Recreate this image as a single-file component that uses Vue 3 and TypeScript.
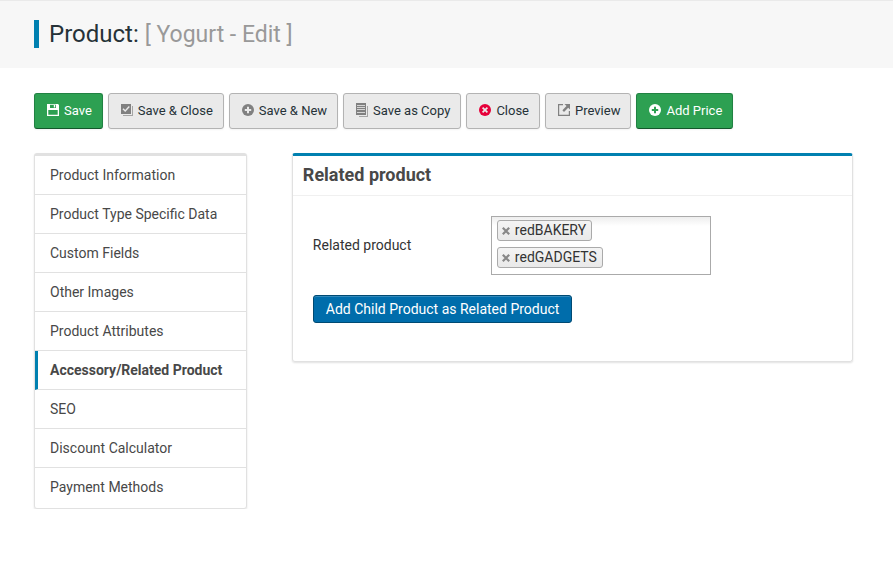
<script setup lang="ts">
import { ref } from 'vue'

type Icon = 'save' | 'saveClose' | 'plus' | 'copy' | 'cancel' | 'preview'

interface ToolbarAction {
  label: string
  icon: Icon
  tone?: 'success' | 'danger'
}

const actions: ToolbarAction[] = [
  { label: 'Save', icon: 'save', tone: 'success' },
  { label: 'Save & Close', icon: 'saveClose' },
  { label: 'Save & New', icon: 'plus' },
  { label: 'Save as Copy', icon: 'copy' },
  { label: 'Close', icon: 'cancel', tone: 'danger' },
  { label: 'Preview', icon: 'preview' },
  { label: 'Add Price', icon: 'plus', tone: 'success' },
]

const tabs: string[] = [
  'Product Information',
  'Product Type Specific Data',
  'Custom Fields',
  'Other Images',
  'Product Attributes',
  'Accessory/Related Product',
  'SEO',
  'Discount Calculator',
  'Payment Methods',
]

const activeTab = ref('Accessory/Related Product')
const related = ref<string[]>(['redBAKERY', 'redGADGETS'])
const query = ref('')

function removeRelated(name: string): void {
  related.value = related.value.filter((item) => item !== name)
}

function addRelated(): void {
  const name = query.value.trim()
  if (name && !related.value.includes(name)) related.value.push(name)
  query.value = ''
}
</script>

<template>
  <div class="page">
    <header class="page-header">
      <h1 class="title">Product: <small>[ Yogurt - Edit ]</small></h1>
    </header>

    <div class="toolbar" role="toolbar">
      <button v-for="action in actions" :key="action.label" type="button" class="tool" :class="action.tone">
        <svg class="icon" viewBox="0 0 12 12" aria-hidden="true">
          <path
            v-if="action.icon === 'save'"
            fill="currentColor"
            fill-rule="evenodd"
            d="M0 0H11L12 1V12H0ZM1.3 6V10.8H10.7V6ZM3 0.8V4H9V0.8ZM6.8 1H8.2V3.5H6.8Z"
          />
          <template v-else-if="action.icon === 'saveClose'">
            <path fill="currentColor" opacity="0.65" d="M11 2H12V12H2V11H11Z" />
            <path fill="currentColor" d="M0 0H10V10H0Z" />
            <path fill="none" stroke="#eaeaea" stroke-width="1.4" d="M2 4.7L4.2 7L8.3 2.5" />
          </template>
          <template v-else-if="action.icon === 'plus'">
            <circle cx="6" cy="6" r="6" fill="currentColor" />
            <path class="cutout" stroke-width="2" d="M6 2.8V9.2M2.8 6H9.2" />
          </template>
          <template v-else-if="action.icon === 'copy'">
            <path fill="currentColor" opacity="0.65" d="M11 2H12V13H3V12H11Z" />
            <path fill="currentColor" d="M0 -1H10V11H0Z" />
            <path stroke="#d5d5d5" stroke-width="1" d="M1 1.5H9M1 3.5H9M1 5.5H9M1 8.5H9" />
          </template>
          <template v-else-if="action.icon === 'cancel'">
            <circle cx="6" cy="6" r="6" fill="currentColor" />
            <path class="cutout" stroke-width="1.7" d="M3.6 3.6L8.4 8.4M8.4 3.6L3.6 8.4" />
          </template>
          <template v-else>
            <path fill="none" stroke="currentColor" stroke-width="1.2" d="M5 0.6H0.6V11.4H11.4V7" />
            <path fill="currentColor" d="M6.5 0H12V5.5L10.2 3.7L6 7.9L4.4 6.3L8.5 2Z" />
          </template>
        </svg>
        <span>{{ action.label }}</span>
      </button>
    </div>

    <div class="content">
      <nav class="tabs">
        <a
          v-for="tab in tabs"
          :key="tab"
          href="#"
          class="tab"
          :class="{ active: tab === activeTab }"
          @click.prevent="activeTab = tab"
        >{{ tab }}</a>
      </nav>

      <main class="panel">
        <h2 class="panel-title">Related product</h2>
        <div class="panel-body">
          <div class="field">
            <label for="related-product">Related product</label>
            <div class="chosen">
              <span v-for="item in related" :key="item" class="chip">
                <button type="button" class="remove" @click="removeRelated(item)">
                  <svg viewBox="0 0 8 8" aria-hidden="true">
                    <path stroke="currentColor" stroke-width="2.2" d="M0.8 0.8L7.2 7.2M7.2 0.8L0.8 7.2" />
                  </svg>
                </button>
                {{ item }}
              </span>
              <input id="related-product" v-model="query" type="text" autocomplete="off" @keydown.enter="addRelated" />
            </div>
          </div>
          <button type="button" class="primary">Add Child Product as Related Product</button>
        </div>
      </main>
    </div>
  </div>
</template>

<style>
body {
  background: #fff;
}
</style>

<style scoped>
.page {
  font-family: Roboto, "Liberation Sans", sans-serif;
  font-size: 14px;
  line-height: 18px;
  color: #333;
}

.page * {
  box-sizing: border-box;
}

button {
  font-family: inherit;
  cursor: pointer;
}

.page-header {
  padding: 19px 34px 20px;
  background: #f7f7f7;
  border-top: 1px solid #eaeaea;
}

.title {
  margin: 0;
  padding-left: 10px;
  border-left: 5px solid #0080b0;
  font-size: 24px;
  font-weight: 400;
  line-height: 28px;
  color: #263238;
}

.title small {
  font-size: 23px;
  line-height: 20px;
  color: #999;
}

.toolbar {
  display: flex;
  flex-wrap: wrap;
  gap: 5px;
  padding: 25px 34px 24px;
}

.tool {
  display: flex;
  align-items: center;
  gap: 5px;
  height: 36px;
  padding: 0 10px 0 12px;
  border: 1px solid #b3b3b3;
  border-radius: 3px;
  background: #eaeaea;
  box-shadow: 0 1px 2px rgba(0, 0, 0, 0.05);
  font-size: 13px;
  line-height: 18px;
  color: #263238;
}

.icon {
  width: 12px;
  height: 12px;
  margin-bottom: 2px;
  overflow: visible;
  color: #808080;
}

.cutout {
  fill: none;
  stroke: #eaeaea;
}

.success {
  border-color: #218243;
  border-bottom-color: #14572b;
  background: #2da052;
  color: #fff;
}

.success .icon {
  color: #fff;
}

.success .cutout {
  stroke: #2da052;
}

.danger .icon {
  color: #e6003a;
}

.content {
  display: grid;
  grid-template-columns: 11fr 29fr;
  gap: 45px;
  align-items: start;
  padding: 0 40px 0 34px;
}

.tabs {
  padding-bottom: 1px;
  border: 1px solid #e1e1e1;
  border-top-width: 3px;
  border-radius: 3px;
  box-shadow: 0 1px 2px rgba(0, 0, 0, 0.12);
}

.tab {
  display: block;
  padding: 10px 12px;
  border-left: 3px solid transparent;
  border-bottom: 1px solid #e1e1e1;
  color: #484848;
  text-decoration: none;
}

.tab:not(.active) {
  padding-left: 15px;
  border-left: 0;
}

.tab:last-child {
  border-bottom-color: transparent;
}

.tab.active {
  border-left-color: #0080b0;
  font-weight: 700;
}

.panel {
  border: 1px solid #e1e1e1;
  border-top: 3px solid #0080b0;
  border-radius: 3px;
  box-shadow: 0 1px 2px rgba(0, 0, 0, 0.12);
}

.panel-title {
  margin: 0;
  padding: 9px 10px 10px;
  border-bottom: 1px solid #f0f0f0;
  font-size: 18px;
  font-weight: 700;
  line-height: 20px;
  color: #484848;
}

.panel-body {
  padding: 20px 20px 38px;
}

.field {
  display: grid;
  grid-template-columns: 178px minmax(0, 220px);
  align-items: center;
  margin-bottom: 20px;
}

.field label {
  padding-bottom: 2px;
}

.chosen {
  display: flex;
  flex-wrap: wrap;
  gap: 6px 8px;
  padding: 3px 5px 6px;
  border: 1px solid #aaa;
  background: linear-gradient(#eee, #fff 9px);
}

.chip {
  display: flex;
  align-items: center;
  gap: 5px;
  height: 21px;
  padding: 0 5px 1px 4px;
  border: 1px solid #aaa;
  border-radius: 3px;
  background: linear-gradient(#f4f4f4, #e9e9e9);
  color: #333;
}

.remove {
  display: flex;
  padding: 2px 0 0;
  border: 0;
  background: none;
  color: #888;
}

.remove svg {
  width: 8px;
  height: 8px;
}

.chosen input {
  flex: 1;
  width: 25px;
  min-width: 0;
  height: 21px;
  padding: 0;
  border: 0;
  outline: 0;
  background: none;
  font: inherit;
}

.primary {
  display: block;
  height: 28px;
  padding: 0 12px;
  border: 1px solid #004a73;
  border-radius: 3px;
  background: #006dab;
  box-shadow: inset 0 1px 0 rgba(255, 255, 255, 0.2);
  font-size: 14px;
  line-height: 18px;
  color: #fff;
}
</style>
